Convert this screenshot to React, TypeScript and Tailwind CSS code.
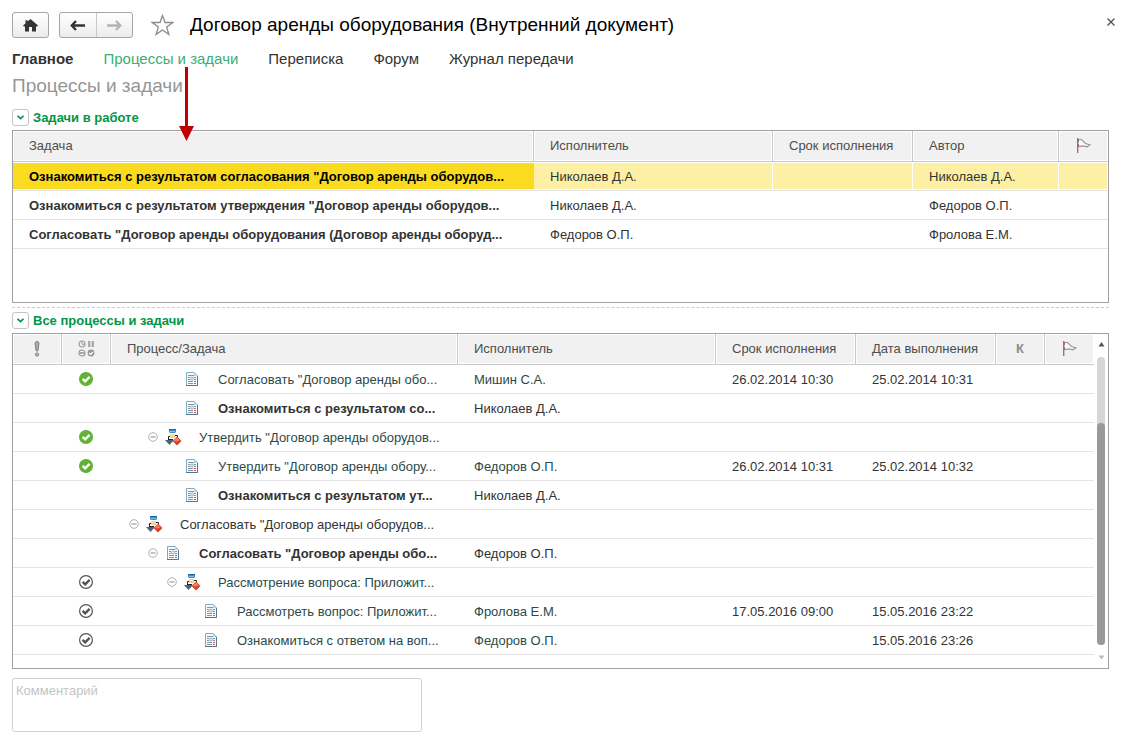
import { useState } from "react";

interface WorkTask {
  task: string;
  performer: string;
  due: string;
  author: string;
}

interface ProcessRow {
  level: 0 | 1 | 2 | 3;
  kind: "process" | "task";
  status?: "done" | "closed";
  expandable?: boolean;
  bold?: boolean;
  dark?: boolean;
  title: string;
  performer?: string;
  due?: string;
  finished?: string;
}

const NAV = ["Главное", "Процессы и задачи", "Переписка", "Форум", "Журнал передачи"];

const WORK_TASKS: WorkTask[] = [
  {
    task: 'Ознакомиться с результатом согласования "Договор аренды оборудов...',
    performer: "Николаев Д.А.",
    due: "",
    author: "Николаев Д.А.",
  },
  {
    task: 'Ознакомиться с результатом утверждения "Договор аренды оборудов...',
    performer: "Николаев Д.А.",
    due: "",
    author: "Федоров О.П.",
  },
  {
    task: 'Согласовать "Договор аренды оборудования (Договор аренды оборуд...',
    performer: "Федоров О.П.",
    due: "",
    author: "Фролова Е.М.",
  },
];

const PROCESSES: ProcessRow[] = [
  { level: 2, kind: "task", status: "done", title: 'Согласовать "Договор аренды обо...', performer: "Мишин С.А.", due: "26.02.2014 10:30", finished: "25.02.2014 10:31" },
  { level: 2, kind: "task", bold: true, title: "Ознакомиться с результатом со...", performer: "Николаев Д.А." },
  { level: 1, kind: "process", status: "done", expandable: true, title: 'Утвердить "Договор аренды оборудов...' },
  { level: 2, kind: "task", status: "done", title: 'Утвердить "Договор аренды обору...', performer: "Федоров О.П.", due: "26.02.2014 10:31", finished: "25.02.2014 10:32" },
  { level: 2, kind: "task", bold: true, title: "Ознакомиться с результатом ут...", performer: "Николаев Д.А." },
  { level: 0, kind: "process", expandable: true, dark: true, title: 'Согласовать "Договор аренды оборудов...' },
  { level: 1, kind: "task", expandable: true, bold: true, title: 'Согласовать "Договор аренды обо...', performer: "Федоров О.П." },
  { level: 2, kind: "process", status: "closed", expandable: true, title: "Рассмотрение вопроса: Приложит..." },
  { level: 3, kind: "task", status: "closed", title: "Рассмотреть вопрос: Приложит...", performer: "Фролова Е.М.", due: "17.05.2016 09:00", finished: "15.05.2016 23:22" },
  { level: 3, kind: "task", status: "closed", title: "Ознакомиться с ответом на воп...", performer: "Федоров О.П.", finished: "15.05.2016 23:26" },
];

const INDENT = ["pl-[17px]", "pl-[36px]", "pl-[55px]", "pl-[74px]"];

const HEAD =
  "h-[31px] border-b border-[#c8c8c8] bg-[#f1f1f1] font-normal text-[#4d4d4d] shadow-[inset_0_0_0_1px_#fff]";
const TH = `${HEAD} border-r px-4 text-left`;
const CELL = "h-[29px] overflow-hidden border-b border-[#e4e4e4] whitespace-nowrap";
const TD = `${CELL} px-4 pt-0.5`;

function FlagIcon() {
  return (
    <svg className="mx-auto mb-0.5 block" width="15" height="15" viewBox="0 0 15 15" fill="none">
      <path
        d="M2 1.5H5.5L9.5 5.5L13.8 6.8L11 8.8L7 7.8L2 8.6"
        fill="#fafafa"
        stroke="#999"
        strokeWidth="1.2"
      />
      <path d="M1 0H2V15H1Z" fill="#808080" />
      <path d="M2 0H3V15H2Z" fill="#c4c4c4" />
      <path d="M1 1H3V4H1ZM1 6H3V9H1Z" fill="#b0685e" />
    </svg>
  );
}

function DocIcon() {
  return (
    <svg className="block" width="16" height="16" viewBox="0 0 16 16">
      <path d="M2.5 1.5H10.5L13.5 4.5V14.5H2.5Z" fill="#f6fafc" stroke="#82acc4" />
      <path d="M13.5 5V14.5H2" fill="none" stroke="#50788f" />
      <path d="M10 1V5H14Z" fill="#bcd6e4" />
      <path d="M4 4.5H10M4 6.5H6M4 8.5H6M4 10.5H9M4 12.5H9" stroke="#8197a6" />
      <path d="M10 6.5H12M10 8.5H12" stroke="#6f99b3" />
      <path d="M10 10.5H12M10 12.5H12" stroke="#e8523c" />
      <circle cx="8" cy="7.5" r="1.5" fill="#e6e6e6" stroke="#a0a0a0" strokeWidth="0.8" />
    </svg>
  );
}

function ProcessIcon() {
  return (
    <svg className="block" width="17" height="17" viewBox="0 0 17 17">
      <path d="M5.5 7.5H3.5V11M9.5 6.5H12.5V9M3 10.5H8" fill="none" stroke="#222" />
      <path d="M4 0H11V3L10 4H5L4 3Z" fill="#3b8fcb" />
      <path d="M4 0H11V1H4Z" fill="#1f689f" />
      <path d="M5 2H10V3H5Z" fill="#7cc0ea" />
      <rect x="5" y="5" width="5" height="4" rx="1" fill="#f4cf8c" />
      <path d="M6 6H9V7H6Z" fill="#fbe6bd" />
      <path d="M0 11H9L4.5 16Z" fill="#48647a" />
      <path d="M12 7.5L16.5 12L12 16.5L7.5 12Z" fill="#dd3f25" />
      <path d="M12 8L14.5 11.5L11.5 12.5L8.5 12Z" fill="#f37f60" />
    </svg>
  );
}

function StatusIcon({ status }: { status: "done" | "closed" }) {
  const done = status === "done";
  return (
    <svg className="mx-auto mb-0.5 block" width="15" height="14" viewBox="0 0 15 14" fill="none">
      <circle
        cx="7"
        cy="7"
        r="6.4"
        fill={done ? "#62b236" : "#fff"}
        stroke={done ? "#62b236" : "#555"}
        strokeWidth="1.2"
      />
      <path d="M3.6 6.8L6.2 9.3L10.6 4.9" stroke={done ? "#fff" : "#505050"} strokeWidth="2.3" />
    </svg>
  );
}

function StatusHeaderIcon() {
  return (
    <svg className="mx-auto mb-0.5 block" width="17" height="17" viewBox="0 0 17 17" fill="none">
      <circle cx="4" cy="4" r="3" stroke="#999" strokeWidth="1.2" />
      <path d="M4 2V4.3H6" stroke="#999" />
      <path d="M10 1H12.4V7H10ZM13.6 1H16V7H13.6Z" fill="#aaa" />
      <circle cx="4" cy="13" r="3" stroke="#999" strokeWidth="1.2" />
      <path d="M2 13H6" stroke="#999" strokeWidth="1.6" />
      <circle cx="13" cy="13" r="3.4" fill="#999" />
      <path d="M11.2 13L12.7 14.3L15 11.8" stroke="#fff" strokeWidth="1.2" />
    </svg>
  );
}

function SectionTitle({ title, open, onToggle }: { title: string; open: boolean; onToggle: () => void }) {
  return (
    <h2 className="flex h-[17px] items-center gap-1 text-[13px] font-bold text-[#009646]">
      <button
        type="button"
        aria-label={title}
        aria-expanded={open}
        onClick={onToggle}
        className="flex size-[17px] items-center justify-center rounded-[3px] border border-[#c4c4c4] bg-white"
      >
        <svg width="7" height="5" viewBox="0 0 7 5" fill="none">
          <path d="M0.5 0.8L3.5 3.6L6.5 0.8" stroke="#009646" strokeWidth="1.6" />
        </svg>
      </button>
      {title}
    </h2>
  );
}

function WorkTable() {
  return (
    <div className="h-[173px] border border-[#a0a0a0]">
      <table className="w-full table-fixed border-separate border-spacing-0">
        <colgroup>
          <col />
          <col className="w-[239px]" />
          <col className="w-[140px]" />
          <col className="w-[146px]" />
          <col className="w-[49px]" />
        </colgroup>
        <thead>
          <tr>
            <th className={TH}>Задача</th>
            <th className={TH}>Исполнитель</th>
            <th className={TH}>Срок исполнения</th>
            <th className={TH}>Автор</th>
            <th className={HEAD}>
              <FlagIcon />
            </th>
          </tr>
        </thead>
        <tbody>
          {WORK_TASKS.map((row, i) => {
            const cell =
              i === 0 ?
                `${TD} border-r border-r-white bg-[#fdf0a5] shadow-[inset_0_1px_#fff,inset_0_-1px_#fff]`
              : TD;
            const first =
              i === 0 ?
                `${TD} bg-[#fbdb1f] font-bold text-black shadow-[inset_0_1px_#fff,inset_0_-1px_#fff]`
              : `${TD} font-bold`;

            return (
              <tr key={row.task}>
                <td className={first}>{row.task}</td>
                <td className={cell}>{row.performer}</td>
                <td className={cell}>{row.due}</td>
                <td className={cell}>{row.author}</td>
                <td className={cell} />
              </tr>
            );
          })}
        </tbody>
      </table>
    </div>
  );
}

function ProcessTable() {
  return (
    <div className="flex h-[336px] border border-[#a0a0a0]">
      <div className="min-w-0 grow">
        <table className="w-full table-fixed border-separate border-spacing-0">
          <colgroup>
            <col className="w-[49px]" />
            <col className="w-[49px]" />
            <col />
            <col className="w-[258px]" />
            <col className="w-[140px]" />
            <col className="w-[140px]" />
            <col className="w-[49px]" />
            <col className="w-[49px]" />
          </colgroup>
          <thead>
            <tr>
              <th className={TH}>
                <svg className="mx-auto block" width="6" height="16" viewBox="0 0 6 16">
                  <path d="M1 2.5a2 2 0 0 1 4 0L3.8 10H2.2Z" fill="#aaa" stroke="#808080" />
                  <circle cx="3" cy="13.5" r="1.6" fill="#bbb" stroke="#808080" />
                </svg>
              </th>
              <th className={TH}>
                <StatusHeaderIcon />
              </th>
              <th className={TH}>Процесс/Задача</th>
              <th className={TH}>Исполнитель</th>
              <th className={TH}>Срок исполнения</th>
              <th className={TH}>Дата выполнения</th>
              <th className={`${HEAD} border-r text-center`}>
                <span className="font-bold text-[#8c8c8c]">К</span>
              </th>
              <th className={HEAD}>
                <FlagIcon />
              </th>
            </tr>
          </thead>
          <tbody>
            {PROCESSES.map((row) => (
              <tr key={row.title + row.level} className={row.bold || row.dark ? "" : "text-[#2c4a48]"}>
                <td className={TD} />
                <td className={TD}>{row.status && <StatusIcon status={row.status} />}</td>
                <td className={CELL}>
                  <div className={`flex items-center ${INDENT[row.level]}`}>
                    <span className="mr-1.5 flex w-3 shrink-0 justify-center">
                      {row.expandable && (
                        <button type="button" aria-label="Свернуть">
                          <svg className="block" width="10" height="10" viewBox="0 0 10 10" fill="none">
                            <circle cx="5" cy="5" r="4.3" stroke="#b0b0b0" />
                            <path d="M2.5 5H7.5" stroke="#8a8a8a" />
                          </svg>
                        </button>
                      )}
                    </span>
                    <span className="w-[34px] shrink-0">
                      {row.kind === "task" ?
                        <DocIcon />
                      : <ProcessIcon />}
                    </span>
                    <span className={row.bold ? "pt-0.5 font-bold" : "pt-0.5"}>{row.title}</span>
                  </div>
                </td>
                <td className={TD}>{row.performer}</td>
                <td className={`${TD} text-[#333]`}>{row.due}</td>
                <td className={`${TD} text-[#333]`}>{row.finished}</td>
                <td className={TD} />
                <td className={TD} />
              </tr>
            ))}
          </tbody>
        </table>
      </div>
      <div className="flex w-[14px] shrink-0 flex-col items-center py-2">
        <svg width="7" height="5" viewBox="0 0 7 5">
          <path d="M3.5 0L6.5 4.5H0.5Z" fill="#555" />
        </svg>
        <div className="mt-2.5 flex w-2 grow flex-col rounded-full bg-[#d6d6d6]">
          <div className="mt-[66px] grow rounded-full bg-[#999]" />
        </div>
        <svg className="mt-2.5" width="7" height="5" viewBox="0 0 7 5">
          <path d="M3.5 4.5L6.5 0.5H0.5Z" fill="#bbb" />
        </svg>
      </div>
    </div>
  );
}

export default function App() {
  const [workOpen, setWorkOpen] = useState(true);
  const [allOpen, setAllOpen] = useState(true);

  return (
    <div className="relative min-h-screen bg-white pt-3 pr-[19px] pb-3 pl-3 font-['Liberation_Sans',Arial,sans-serif] text-[13px] leading-4 text-[#333]">
      <header className="flex h-[26px] items-center">
        <button
          type="button"
          aria-label="Домой"
          className="flex h-[26px] w-[37px] items-center justify-center rounded-[3px] border border-[#a6a6a6] bg-linear-to-b from-white to-[#ececec]"
        >
          <svg width="15" height="13" viewBox="0 0 15 13" fill="#333">
            <path d="M7.5 0L15 6.6L14.2 7.5H13V12.5H9V8H6V12.5H2V7.5H0.8L0 6.6L2.5 4.4V1.2H4.6V2.5Z" />
          </svg>
        </button>
        <div className="ml-2.5 flex h-[26px] w-[74px] rounded-[3px] border border-[#a6a6a6] bg-linear-to-b from-white to-[#ececec]">
          <button
            type="button"
            aria-label="Назад"
            className="flex flex-1 items-center justify-center border-r border-[#c8c8c8]"
          >
            <svg width="15" height="11" viewBox="0 0 15 11" fill="none" stroke="#333" strokeWidth="2.4">
              <path d="M15 5.5H2M6 1L1.8 5.5L6 10" />
            </svg>
          </button>
          <button type="button" aria-label="Вперед" className="flex flex-1 items-center justify-center">
            <svg width="15" height="11" viewBox="0 0 15 11" fill="none" stroke="#b4b4b4" strokeWidth="2.4">
              <path d="M0 5.5H13M9 1L13.2 5.5L9 10" />
            </svg>
          </button>
        </div>
        <button type="button" aria-label="В избранное" className="ml-[18px]">
          <svg
            className="block"
            width="23"
            height="22"
            viewBox="0 0 23 22"
            fill="#fff"
            stroke="#8c8c8c"
            strokeWidth="1.3"
          >
            <path d="M11.5 1.5L14 8.5H21.8L15.6 13L17.9 20.4L11.5 16L5.1 20.4L7.4 13L1.2 8.5H9Z" />
          </svg>
        </button>
        <h1 className="ml-4 grow text-[19px] leading-6 text-black">
          Договор аренды оборудования (Внутренний документ)
        </h1>
        <button type="button" aria-label="Закрыть" className="-mr-1.5 self-start pt-1.5">
          <svg className="block" width="8" height="8" viewBox="0 0 8 8" stroke="#555" strokeWidth="1.4">
            <path d="M0.5 0.5L7.5 7.5M7.5 0.5L0.5 7.5" />
          </svg>
        </button>
      </header>

      <nav className="mt-3 flex gap-[30px] text-[15px] leading-[18px]">
        {NAV.map((item, i) => (
          <a
            key={item}
            href="#"
            className={
              i === 0 ? "font-bold"
              : i === 1 ?
                "text-[#3bae72]"
              : ""
            }
          >
            {item}
          </a>
        ))}
      </nav>

      <p className="mt-1.5 text-[19px] leading-6 text-[#969696]">Процессы и задачи</p>

      <section className="mt-[11px]">
        <SectionTitle title="Задачи в работе" open={workOpen} onToggle={() => setWorkOpen(!workOpen)} />
        <div className="mt-1">{workOpen && <WorkTable />}</div>
      </section>

      <section className="mt-1 border-t border-dashed border-[#ccc] pt-1">
        <SectionTitle title="Все процессы и задачи" open={allOpen} onToggle={() => setAllOpen(!allOpen)} />
        <div className="mt-1">{allOpen && <ProcessTable />}</div>
      </section>

      <textarea
        aria-label="Комментарий"
        placeholder="Комментарий"
        className="mt-[9px] block h-[54px] w-[410px] resize-none rounded-[3px] border border-[#d0d0d0] px-[3px] py-1 placeholder:text-[#c4c4c4]"
      />

      {/* pointer from the active tab down to the task list */}
      <svg className="absolute top-[67px] left-[179px]" width="15" height="74" viewBox="0 0 15 74" fill="#c00000">
        <path d="M6 0H9V59H15L7.5 74L0 59H6Z" />
      </svg>
    </div>
  );
}
